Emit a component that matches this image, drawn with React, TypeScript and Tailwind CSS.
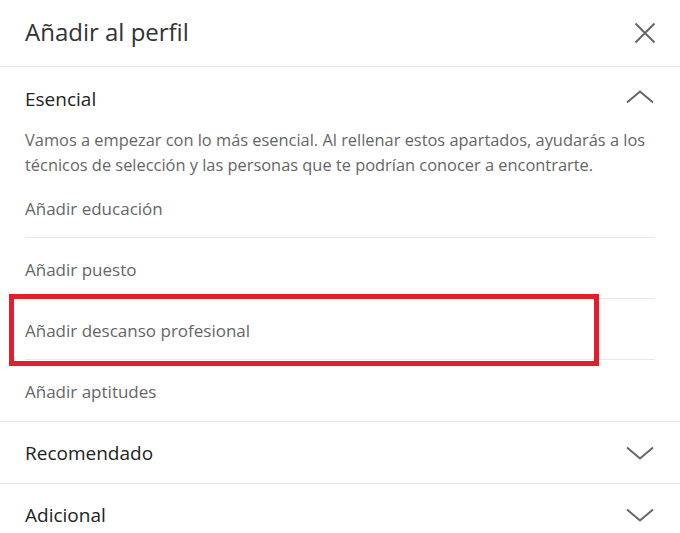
const font = { fontFamily: '"Open Sans", "Noto Sans", sans-serif' };

function ChevronUp() {
  return (
    <svg width="28" height="14" viewBox="0 0 28 14" fill="none" className="shrink-0">
      <polyline points="1,12.5 14,1.5 27,12.5" stroke="#666" strokeWidth="2" />
    </svg>
  );
}

function ChevronDown() {
  return (
    <svg width="28" height="14" viewBox="0 0 28 14" fill="none" className="shrink-0">
      <polyline points="1,1.5 14,12.5 27,1.5" stroke="#666" strokeWidth="2" />
    </svg>
  );
}

function CloseIcon() {
  return (
    <svg width="22" height="22" viewBox="0 0 22 22" fill="none">
      <path d="M1.5 1.5 L20.5 20.5 M20.5 1.5 L1.5 20.5" stroke="#666" strokeWidth="2" />
    </svg>
  );
}

const items = ["Añadir educación", "Añadir puesto", "Añadir descanso profesional", "Añadir aptitudes"];

export default function App() {
  return (
    <div className="w-[680px] h-[533px] overflow-hidden bg-white relative" style={font}>
      {/* header */}
      <div className="h-[67px] flex items-center justify-between pl-[25px] pr-[24px] border-b border-[#e6e6e6]">
        <h1 className="text-[24px] leading-[30px] text-[#333] font-normal -mt-[2px]">Añadir al perfil</h1>
        <CloseIcon />
      </div>

      {/* Esencial */}
      <div className="px-[25px]">
        <div className="flex items-center justify-between pt-[20px] h-[44px]">
          <span className="text-[19px] leading-[24px] text-[#222]">Esencial</span>
          <span className="mr-[1px] -mt-[4px]">
            <ChevronUp />
          </span>
        </div>
        <p className="mt-[16px] text-[16.4px] leading-[25px] text-[#666]">
          Vamos a empezar con lo más esencial. Al rellenar estos apartados, ayudarás a los técnicos de
          selección y las personas que te podrían conocer a encontrarte.
        </p>
        <ul>
          {items.map((t, i) => (
            <li
              key={t}
              className={
                "h-[61px] pt-[20px] text-[17px] leading-[24px] text-[#666] " +
                (i < items.length - 1 ? "border-b border-[#e8e8e8]" : "")
              }
            >
              {t}
            </li>
          ))}
        </ul>
      </div>

      {/* collapsed sections */}
      {["Recomendado", "Adicional"].map((t) => (
        <div key={t} className="border-t border-[#e6e6e6] h-[62px] flex items-center justify-between pl-[25px] pr-[26px]">
          <span className="text-[19px] leading-[24px] text-[#222]">{t}</span>
          <ChevronDown />
        </div>
      ))}

      {/* highlight annotation */}
      <div className="absolute left-[9px] top-[294px] w-[590px] h-[72px] border-[5px] border-[#e31e2b] pointer-events-none" />
    </div>
  );
}
